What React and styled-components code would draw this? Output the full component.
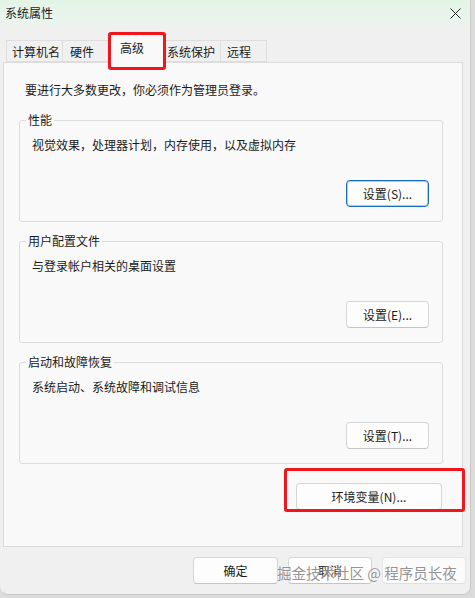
import styled, { createGlobalStyle } from "styled-components";

const GlobalStyle = createGlobalStyle`
  html, body {
    margin: 0;
    padding: 0;
  }
  body {
    background: #dcdcdc;
    font-family: "Noto Sans CJK SC", "Microsoft YaHei UI", sans-serif;
    font-size: 12px;
    color: #1b1b1b;
  }
`;

const Win = styled.div`
  position: relative;
  width: 471px;
  height: 595px;
  box-sizing: border-box;
  background: #f0f0f0;
  border-right: 1px solid #c9c9c9;
  border-bottom: 1px solid #c9c9c9;
  border-radius: 0 0 8px 8px;
  display: flex;
  flex-direction: column;
  overflow: hidden;
`;

const TitleBar = styled.div`
  height: 30px;
  flex-shrink: 0;
  display: flex;
  align-items: center;
  justify-content: space-between;
  padding: 0 9px 4px 5px;
  box-sizing: border-box;
  background: linear-gradient(180deg, #e3f5e6 0%, #eaf4ec 65%, #f0f0f0 100%);
`;

const Title = styled.span`
  font-size: 12px;
  line-height: 16px;
  color: #1b1b1b;
`;

const CloseIcon = styled.svg`
  width: 11px;
  height: 11px;
  display: block;
`;

const TabStrip = styled.div`
  height: 33px;
  flex-shrink: 0;
  display: flex;
  align-items: flex-end;
  padding-left: 6px;
  margin-bottom: -1px;
  position: relative;
  z-index: 1;
`;

const Tab = styled.div`
  box-sizing: border-box;
  width: ${(p) => p.$w}px;
  height: ${(p) => (p.$active ? 30 : 22)}px;
  margin-bottom: ${(p) => (p.$active ? 0 : 1)}px;
  padding-left: ${(p) => p.$pad}px;
  line-height: ${(p) => (p.$active ? 28 : 22)}px;
  font-size: 12px;
  white-space: nowrap;
  background: ${(p) => (p.$active ? "#f9f9f9" : "#f0f0f0")};
  border: 1px solid #dedede;
  border-bottom: ${(p) => (p.$active ? "none" : "1px solid #dedede")};
  border-left-width: ${(p) => (p.$first || p.$active ? 1 : 0)}px;
`;

const Panel = styled.div`
  box-sizing: border-box;
  height: 485px;
  margin: 0 7px 0 3px;
  padding-top: 19px;
  background: #f9f9f9;
  border: 1px solid #dcdcdc;
  display: flex;
  flex-direction: column;
`;

const Intro = styled.div`
  margin-left: 21px;
  line-height: 16px;
`;

const Group = styled.fieldset`
  margin: ${(p) => p.$top}px 19px 0 15px;
  padding: 0;
  min-width: 0;
  border: 1px solid #dcdcdc;
  border-radius: 3px;
`;

const Legend = styled.legend`
  margin-left: 6px;
  padding: 0 2px;
  line-height: 16px;
  font-size: 12px;
`;

const GroupBody = styled.div`
  display: flex;
  flex-direction: column;
  padding: 9px 13px 14px 12px;
`;

const Desc = styled.div`
  line-height: 16px;
`;

const ButtonRow = styled.div`
  display: flex;
  justify-content: flex-end;
  margin-top: ${(p) => p.$top}px;
  margin-right: ${(p) => p.$right || 0}px;
`;

const Button = styled.button`
  box-sizing: border-box;
  width: ${(p) => p.$w || 83}px;
  height: 27px;
  padding: 0;
  font-family: inherit;
  font-size: 12px;
  color: #1b1b1b;
  background: ${(p) => (p.disabled ? "#fbfbfb" : "#fdfdfd")};
  border: 1px solid ${(p) => (p.$primary ? "#1a6fb8" : p.disabled ? "#e6e6e6" : "#d6d6d6")};
  border-bottom-color: ${(p) => (p.$primary ? "#1a6fb8" : p.disabled ? "#e0e0e0" : "#c4c4c4")};
  box-shadow: ${(p) => (p.$primary ? "inset 0 0 0 1px rgba(26,111,184,0.35)" : "none")};
  border-radius: 4px;
`;

const Footer = styled.div`
  display: flex;
  justify-content: flex-end;
  gap: 10px;
  padding: 10px 4px 0 0;
`;

const Highlight = styled.div`
  position: absolute;
  left: ${(p) => p.$x}px;
  top: ${(p) => p.$y}px;
  width: ${(p) => p.$w}px;
  height: ${(p) => p.$h}px;
  box-sizing: border-box;
  border: 3px solid #f0161b;
  border-radius: 3px;
  z-index: 5;
  pointer-events: none;
`;

const Watermark = styled.div`
  position: absolute;
  left: 277px;
  top: 563px;
  font-size: 14.5px;
  line-height: 20px;
  color: rgba(120, 120, 120, 0.8);
  text-shadow: 0 0 2px rgba(255, 255, 255, 0.9);
  white-space: nowrap;
  z-index: 6;
`;

const tabs = [
  { label: "计算机名", w: 57, pad: 5 },
  { label: "硬件", w: 46, pad: 7 },
  { label: "高级", w: 57, pad: 10, active: true },
  { label: "系统保护", w: 55, pad: 1 },
  { label: "远程", w: 46, pad: 6 },
];

const groups = [
  { title: "性能", desc: "视觉效果，处理器计划，内存使用，以及虚拟内存", btn: "设置(S)...", primary: true, top: 14 },
  { title: "用户配置文件", desc: "与登录帐户相关的桌面设置", btn: "设置(E)...", top: 11 },
  { title: "启动和故障恢复", desc: "系统启动、系统故障和调试信息", btn: "设置(T)...", top: 11 },
];

export default function App() {
  return (
    <>
      <GlobalStyle />
      <Win>
        <TitleBar>
          <Title>系统属性</Title>
          <CloseIcon viewBox="0 0 11 11">
            <path d="M0.5 0.5 L10.5 10.5 M10.5 0.5 L0.5 10.5" stroke="#222" strokeWidth="1" fill="none" />
          </CloseIcon>
        </TitleBar>

        <TabStrip>
          {tabs.map((t, i) => (
            <Tab key={t.label} $w={t.w} $pad={t.pad} $active={t.active} $first={i === 0}>
              {t.label}
            </Tab>
          ))}
        </TabStrip>

        <Panel>
          <Intro>要进行大多数更改，你必须作为管理员登录。</Intro>
          {groups.map((g) => (
            <Group key={g.title} $top={g.top}>
              <Legend>{g.title}</Legend>
              <GroupBody>
                <Desc>{g.desc}</Desc>
                <ButtonRow $top={27}>
                  <Button $primary={g.primary}>{g.btn}</Button>
                </ButtonRow>
              </GroupBody>
            </Group>
          ))}
          <ButtonRow $top={19} $right={20}>
            <Button $w={146}>环境变量(N)...</Button>
          </ButtonRow>
        </Panel>

        <Footer>
          <Button $w={85}>确定</Button>
          <Button $w={84}>取消</Button>
          <Button $w={84} disabled aria-label="应用" />
        </Footer>

        <Highlight $x={108} $y={32} $w={58} $h={38} />
        <Highlight $x={284} $y={468} $w={181} $h={44} />
        <Watermark>掘金技术社区 @ 程序员长夜</Watermark>
      </Win>
    </>
  );
}
